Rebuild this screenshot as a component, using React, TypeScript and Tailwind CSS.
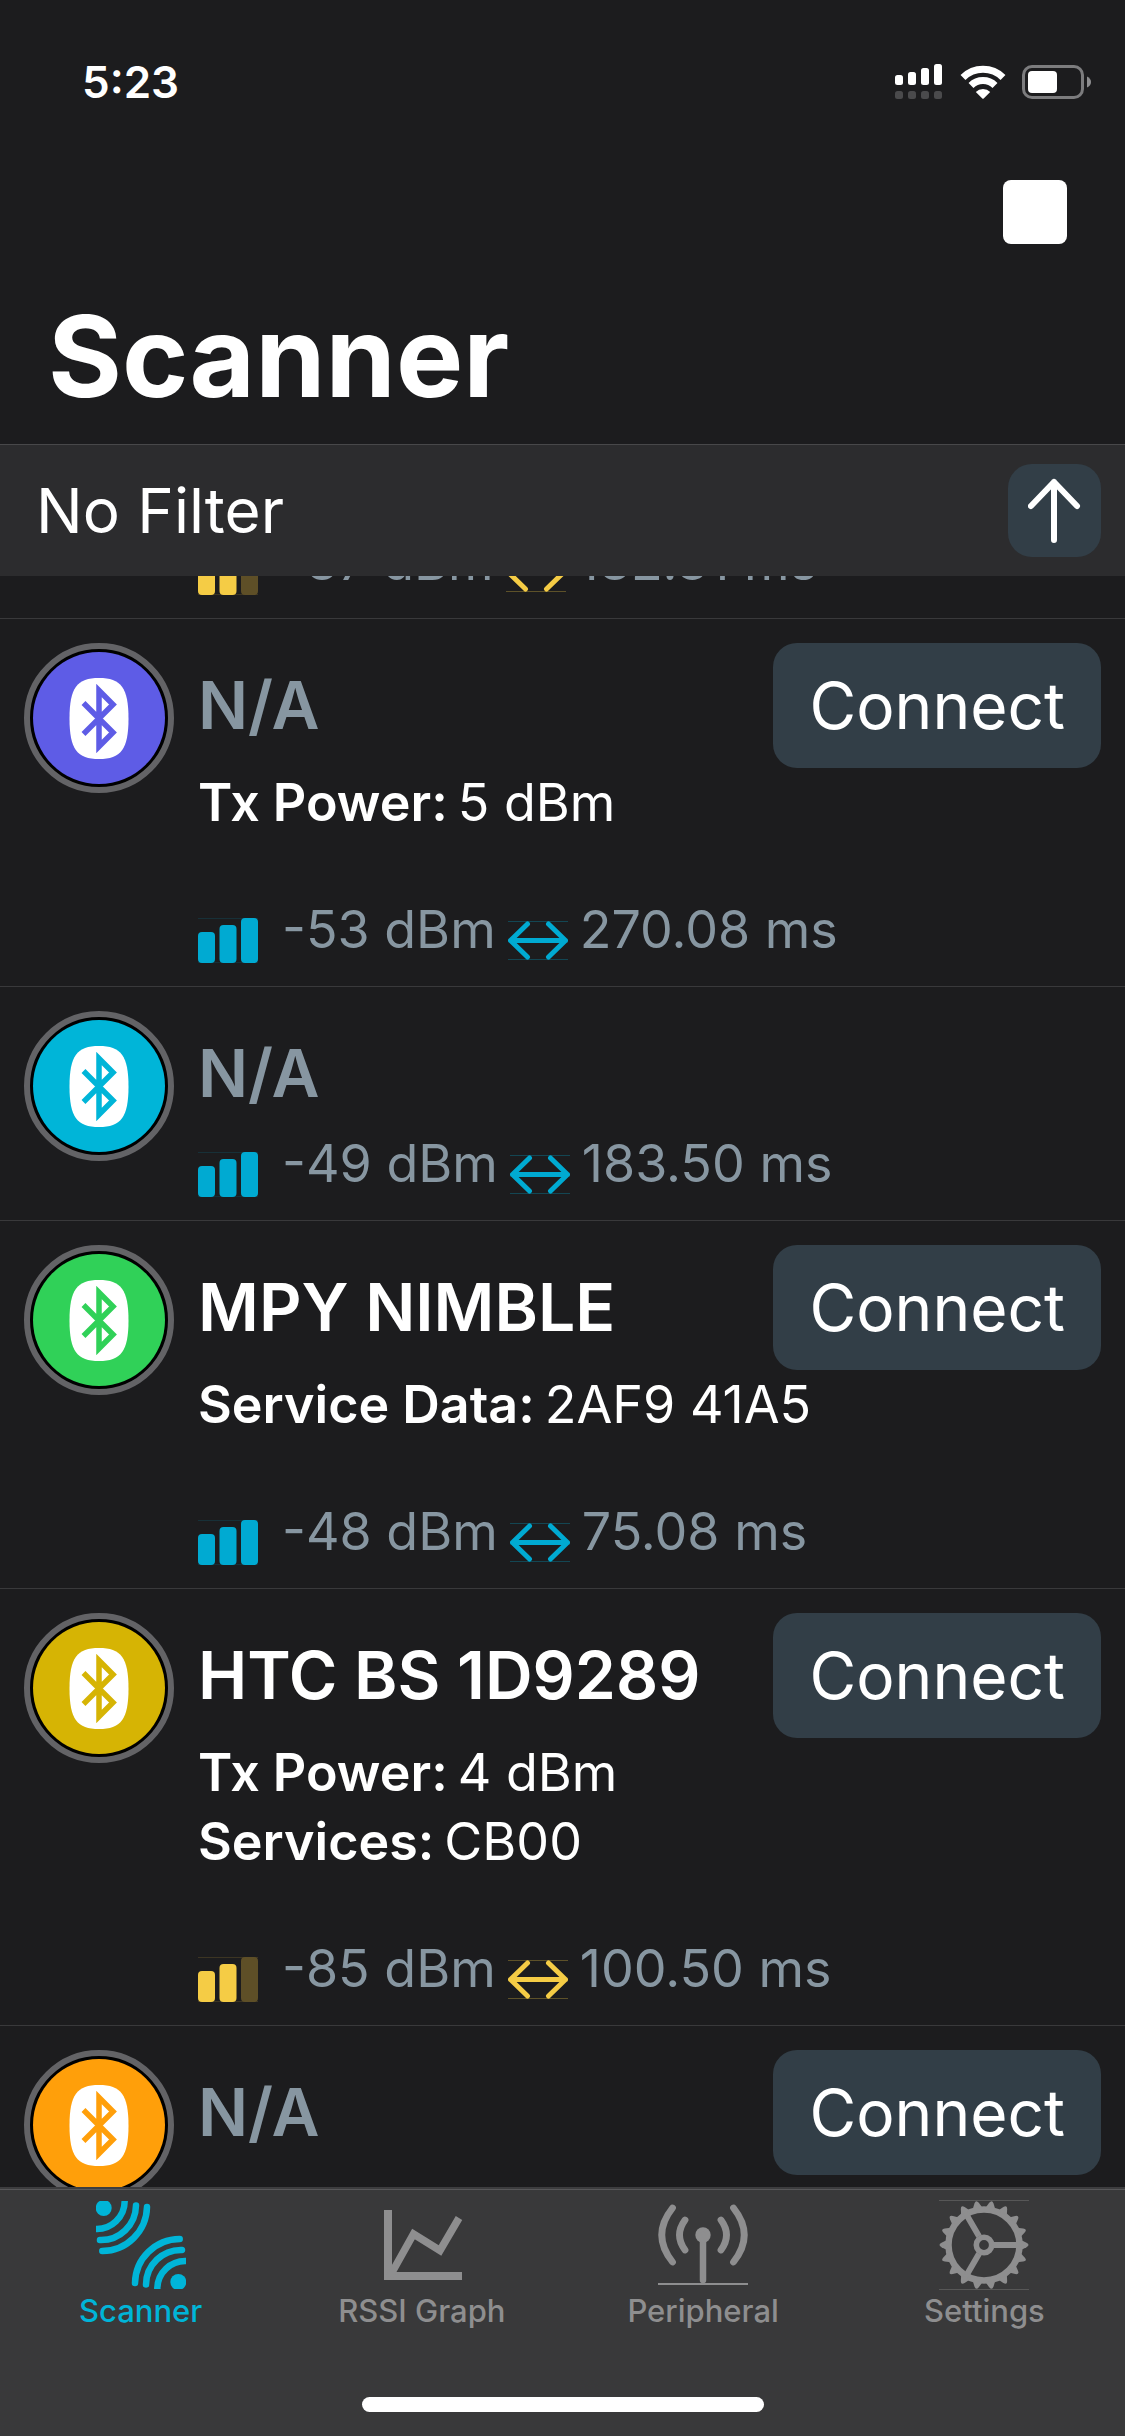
import type { ReactNode } from 'react';

type Device = {
  name?: string;
  color: string;
  reading?: { rssi: number; interval: string };
  weak?: boolean;
  connectable?: boolean;
  details?: [string, string][];
};

const devices: Device[] = [
  { color: 'bg-[#ff453a]', reading: { rssi: -87, interval: '182.31' }, weak: true },
  { name: 'N/A', color: 'bg-[#5e5ce6]', reading: { rssi: -53, interval: '270.08' }, connectable: true, details: [['Tx Power', '5 dBm']] },
  { name: 'N/A', color: 'bg-[#00b5d8]', reading: { rssi: -49, interval: '183.50' } },
  { name: 'MPY NIMBLE', color: 'bg-[#30d158]', reading: { rssi: -48, interval: '75.08' }, connectable: true, details: [['Service Data', '2AF9 41A5']] },
  { name: 'HTC BS 1D9289', color: 'bg-[#d6b404]', reading: { rssi: -85, interval: '100.50' }, weak: true, connectable: true, details: [['Tx Power', '4 dBm'], ['Services', 'CB00']] },
  { name: 'N/A', color: 'bg-[#ff9f0a]', connectable: true },
];

function StatusIcons() {
  return (
    <div className="flex items-center">
      <svg width="47" height="36" viewBox="0 0 47 36" fill="#fff" aria-label="Signal">
        <rect x="0" y="11" width="8" height="10" rx="2.5" />
        <rect x="13" y="8" width="8" height="13" rx="2.5" />
        <rect x="26" y="4" width="8" height="17" rx="2.5" />
        <rect x="39" y="0" width="8" height="21" rx="2.5" />
        <g fill="#4a4a4c">
          <rect x="0" y="27" width="8" height="8" rx="2.5" />
          <rect x="13" y="27" width="8" height="8" rx="2.5" />
          <rect x="26" y="27" width="8" height="8" rx="2.5" />
          <rect x="39" y="27" width="8" height="8" rx="2.5" />
        </g>
      </svg>
      <svg className="ml-[18px]" width="46" height="34" viewBox="0 0 46 34" fill="none" aria-label="Wi-Fi">
        <path d="M3 12.500A28.500 28.500 0 0 1 43 12.500" stroke="#fff" strokeWidth="7" />
        <path d="M11 20.500A17 17 0 0 1 35 20.500" stroke="#fff" strokeWidth="7" />
        <path d="M15.800 27A10 10 0 0 1 30.200 27L23.700 33.400Q23 34 22.300 33.400Z" fill="#fff" />
      </svg>
      <svg className="ml-4" width="69" height="34" viewBox="0 0 69 34" fill="none" aria-label="Battery">
        <rect x="1.500" y="1.500" width="59" height="31" rx="8.500" stroke="#7c7c7e" strokeWidth="3" />
        <rect x="6" y="6" width="29" height="22" rx="4" fill="#fff" />
        <path d="M65 11.500Q69 13.500 69 17T65 22.500Z" fill="#8e8e90" />
      </svg>
    </div>
  );
}

function Avatar({ color }: { color: string }) {
  return (
    <div className="size-[150px] shrink-0 rounded-full border-6 border-[#636366] bg-black p-[3px]">
      <div className={`flex size-full items-center justify-center rounded-full ${color}`}>
        <BluetoothBadge color={color} />
      </div>
    </div>
  );
}

function BluetoothBadge({ color }: { color: string }) {
  const stroke = color.slice(4, -1);
  return (
    <svg width="60" height="81" viewBox="0 0 60 81" fill="none" aria-hidden="true">
      <path d="M30 0C52 0 59.500 10 59.500 40.500S52 81 30 81 .500 71 .500 40.500 8 0 30 0Z" fill="#fff" />
      <path d="M14.500 25L44 54.500L30 68.500V12.500L44 26.500L14.500 56" stroke={stroke} strokeWidth="5.500" />
    </svg>
  );
}

function Bars({ weak }: { weak?: boolean }) {
  const on = weak ? '#f5cc45' : '#00aad2';
  return (
    <svg className="shrink-0" width="60" height="45" viewBox="0 0 60 45" aria-hidden="true">
      <path d="M0 .500H60M0 44.500H60" stroke={on} strokeOpacity=".15" />
      <rect x="0" y="14" width="17" height="31" rx="4" fill={on} />
      <rect x="21.500" y="7" width="17" height="38" rx="4" fill={on} />
      <rect x="43" y="0" width="17" height="45" rx="4" fill={weak ? '#5e4f27' : on} />
    </svg>
  );
}

function IntervalArrow({ weak }: { weak?: boolean }) {
  const c = weak ? '#f5cc45' : '#00aad2';
  return (
    <svg className="mx-3 shrink-0" width="60" height="42" viewBox="0 0 60 42" fill="none" stroke={c} aria-hidden="true">
      <path d="M0 .500H60M0 38.500H60" strokeOpacity=".3" />
      <path d="M2.500 19.500H57.500M19.500 3L2.500 19.500L19.500 36M40.500 3L57.500 19.500L40.500 36" strokeWidth="5" strokeLinecap="round" strokeLinejoin="round" />
    </svg>
  );
}

function DeviceRow({ d }: { d: Device }) {
  return (
    <li className="flex gap-6 border-b border-[#39393b] px-6 pt-6 pb-[23px]">
      <Avatar color={d.color} />
      <div className="min-w-0 flex-1">
        <div className="flex h-[125px] items-center justify-between">
          {d.name && (
            <h2 className={d.name === 'N/A' ? 'text-[66px] font-semibold whitespace-nowrap text-[#8796a1]' : 'text-[66px] font-semibold whitespace-nowrap text-white'}>{d.name}</h2>
          )}
          {d.connectable && (
            <button type="button" className="h-full rounded-3xl bg-[#323e47] px-9 text-[64px] text-white">
              Connect
            </button>
          )}
        </div>
        {d.details && (
          <dl className="mb-[65px] text-[52px] leading-[69px] text-white">
            {d.details.map(([k, v]) => (
              <div key={k} className="flex gap-2.5">
                <dt className="font-semibold">{k}:</dt>
                <dd>{v}</dd>
              </div>
            ))}
          </dl>
        )}
        {d.reading && (
          <div className="flex h-[61px] items-end text-[52px] leading-[56px] whitespace-nowrap text-[#8796a1]">
            <Bars weak={d.weak} />
            <span className="ml-6 self-start">{d.reading.rssi} dBm</span>
            <IntervalArrow weak={d.weak} />
            <span className="self-start">{d.reading.interval} ms</span>
          </div>
        )}
      </div>
    </li>
  );
}

const gearTeeth = Array.from({ length: 18 }, (_, i) => i * 20);

const tabs: { label: string; icon: ReactNode }[] = [
  {
    label: 'Scanner',
    icon: (
      <svg width="90" height="90" viewBox="0 0 90 90" fill="none" aria-hidden="true">
        <defs>
          <clipPath id="scan-clip">
            <rect x="0" y="1" width="90" height="88" />
          </clipPath>
          <g id="scan-wave" stroke="currentColor" strokeWidth="6.500" strokeLinecap="round">
            <circle cx="7.700" cy="8" r="8" fill="currentColor" stroke="none" />
            <path d="M28.700 -1V1A28 28 0 0 1 -1 29" />
            <path d="M40 5.500A35 35 0 0 1 4 40" />
            <path d="M51 7A45 45 0 0 1 6.300 51" />
          </g>
        </defs>
        <g clipPath="url(#scan-clip)">
          <use href="#scan-wave" />
          <use href="#scan-wave" transform="rotate(180 45 45)" />
        </g>
      </svg>
    ),
  },
  {
    label: 'RSSI Graph',
    icon: (
      <svg width="90" height="90" viewBox="0 0 90 90" fill="none" stroke="currentColor" strokeWidth="8" aria-hidden="true">
        <path d="M11 10V76H85" />
        <path d="M13 76L36.500 34L63 50.500L82 18" strokeWidth="7.500" />
      </svg>
    ),
  },
  {
    label: 'Peripheral',
    icon: (
      <svg width="90" height="90" viewBox="0 0 90 90" fill="none" stroke="currentColor" strokeWidth="6.800" strokeLinecap="round" aria-hidden="true">
        <circle cx="45" cy="35" r="7.700" fill="currentColor" stroke="none" />
        <path d="M45 35V80" strokeWidth="6.500" />
        <path d="M27 20Q16 35 27 50M63 20Q74 35 63 50" />
        <path d="M14.500 8Q-7 35 14.500 62M75.500 8Q97 35 75.500 62" />
        <path d="M0 84H90" strokeWidth="2" strokeLinecap="butt" />
      </svg>
    ),
  },
  {
    label: 'Settings',
    icon: (
      <svg width="90" height="90" viewBox="0 0 90 90" fill="none" stroke="currentColor" aria-hidden="true">
        <path d="M0 .500H90M0 89.500H90" strokeOpacity=".35" />
        <circle cx="45" cy="45" r="35.500" strokeWidth="6.500" />
        <circle cx="45" cy="45" r="7.700" strokeWidth="5.600" />
        <path d="M55 45H80M40 36.300L27.500 14.700M40 53.700L27.500 75.300" strokeWidth="6" />
        {gearTeeth.map((a) => (
          <path key={a} d="M82 40L87.500 42.800Q91.500 45 87.500 47.200L82 50Z" fill="currentColor" stroke="none" transform={`rotate(${a} 45 45)`} />
        ))}
      </svg>
    ),
  },
];

export default function App() {
  return (
    <div className="flex h-screen flex-col overflow-hidden bg-[#1c1c1e] font-['Inter',sans-serif] text-white">
      <header className="shrink-0">
        <div className="flex h-[164px] items-center justify-between pr-[34px] pl-[82px]">
          <time className="text-[44px] font-semibold">5:23</time>
          <StatusIcons />
        </div>
        <div className="flex h-24 items-center justify-end pr-[58px]">
          <button type="button" aria-label="Stop scanning" className="size-16 rounded-lg bg-white" />
        </div>
        <h1 className="px-12 pt-7 pb-5 text-[113px] leading-[136px] font-bold">Scanner</h1>
      </header>

      <div className="flex h-[132px] shrink-0 items-center justify-between border-t border-[#48484a] bg-[#2c2c2e] pr-6 pl-9">
        <button type="button" className="text-[62px]">
          No Filter
        </button>
        <button type="button" aria-label="Sort ascending" className="flex size-[93px] items-center justify-center rounded-3xl bg-[#323e47]">
          <svg width="54" height="66" viewBox="0 0 54 66" fill="none" stroke="#fff" strokeWidth="6" strokeLinecap="round" strokeLinejoin="round" aria-hidden="true">
            <path d="M26 4V62M3 28L26 4L49 28" />
          </svg>
        </button>
      </div>

      <main className="min-h-0 flex-1 overflow-hidden">
        <ul className="-mt-[191px]">
          {devices.map((d, i) => (
            <DeviceRow key={i} d={d} />
          ))}
        </ul>
      </main>

      <footer className="shrink-0 border-t-2 border-[#3d3d3f] bg-[#39393a]">
        <nav className="grid grid-cols-4 border-t border-[#58585a] pt-[10px]">
          {tabs.map((t, i) => (
            <a key={t.label} href="#" className={i === 0 ? 'flex flex-col items-center text-[#00b5d8]' : 'flex flex-col items-center text-[#8e8e8f]'}>
              {t.icon}
              <span className="text-[31px] leading-[42px] font-medium">{t.label}</span>
            </a>
          ))}
        </nav>
        <div className="mx-auto mt-[65px] mb-6 h-[15px] w-[402px] rounded-full bg-white" />
      </footer>
    </div>
  );
}
